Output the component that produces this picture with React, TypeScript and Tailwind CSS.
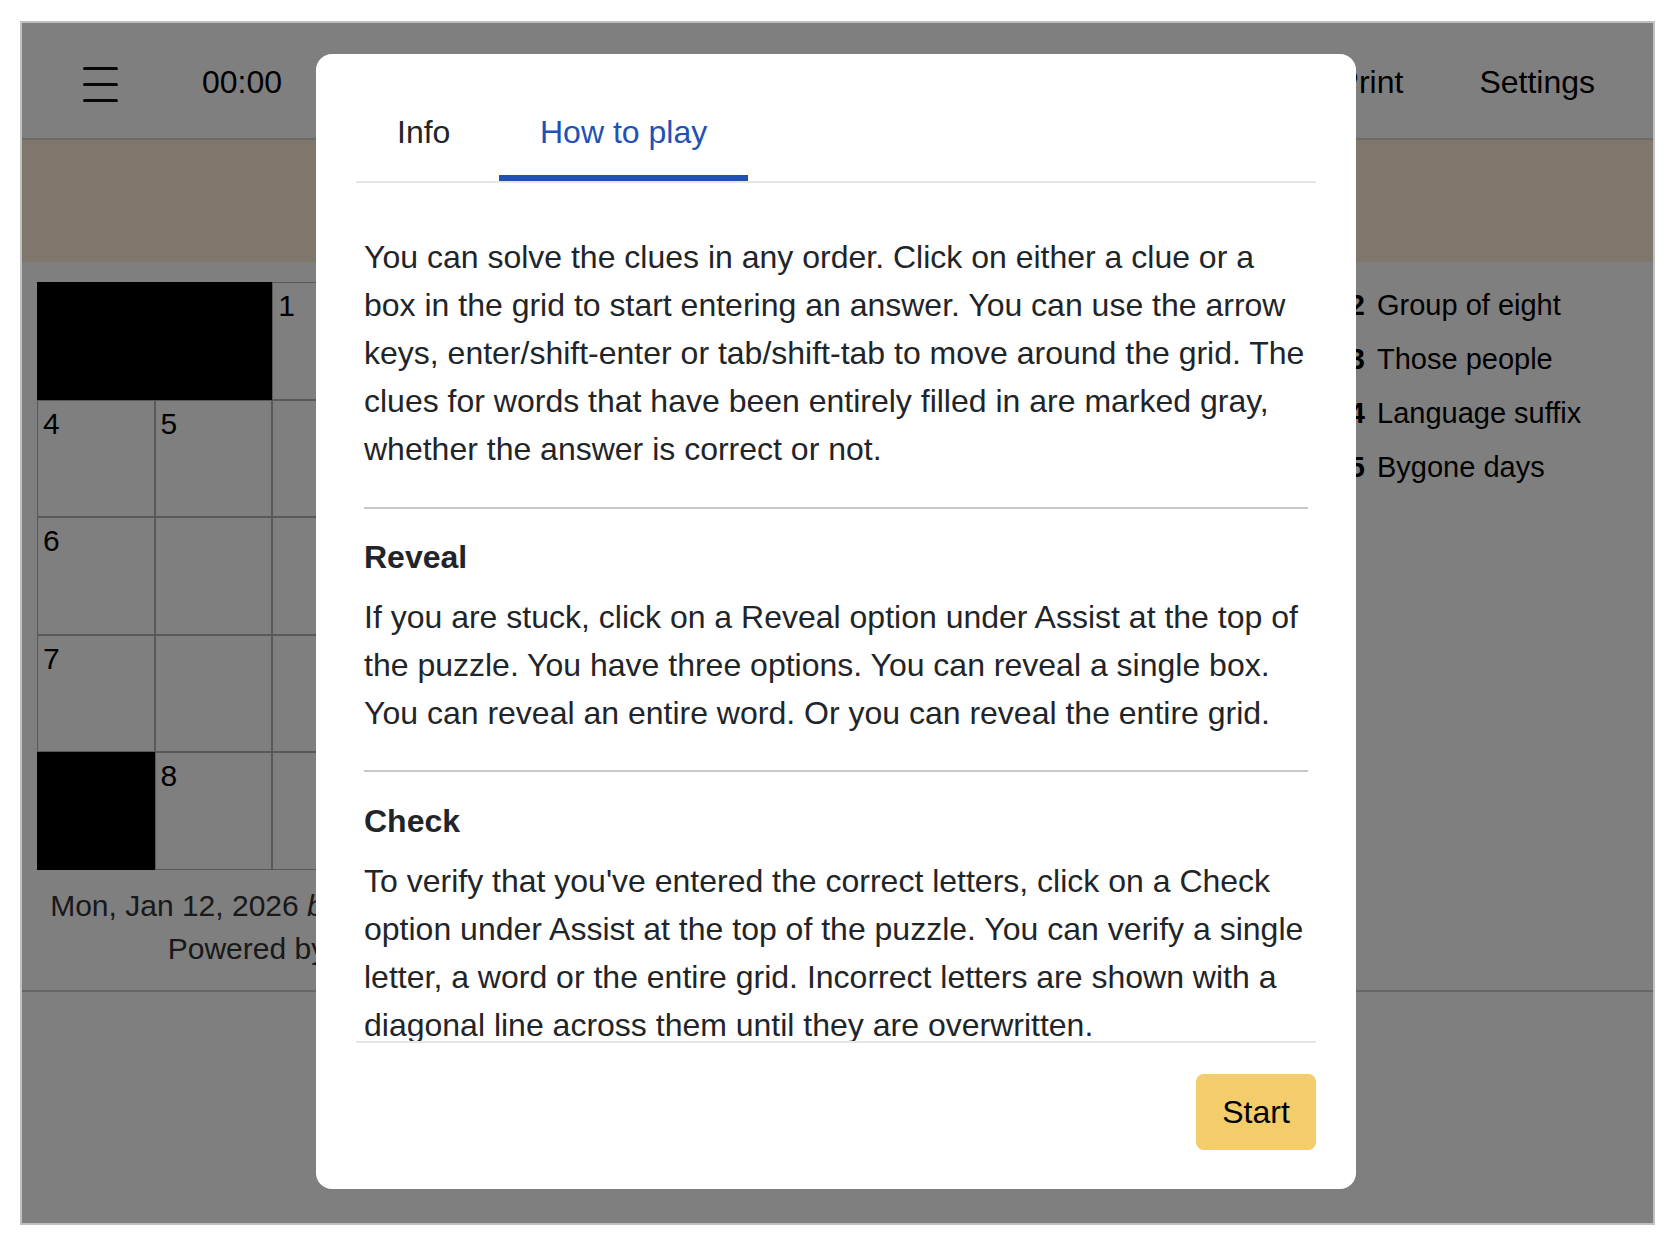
import React from 'react';

type Cell = { black?: boolean; num?: number };

const B: Cell = { black: true };
const E: Cell = {};

const GRID: Cell[][] = [
  [B, B, { num: 1 }, { num: 2 }, { num: 3 }],
  [{ num: 4 }, { num: 5 }, E, E, E],
  [{ num: 6 }, E, E, E, E],
  [{ num: 7 }, E, E, E, E],
  [B, { num: 8 }, E, E, E],
];

const ACROSS = [
  { n: 1, text: 'Sticky stuff' },
  { n: 4, text: 'Smartphone screen feature' },
  { n: 6, text: 'Opera solo' },
  { n: 7, text: 'Not home' },
  { n: 8, text: 'Paddles' },
];

const DOWN = [
  { n: 2, text: 'Group of eight' },
  { n: 3, text: 'Those people' },
  { n: 4, text: 'Language suffix' },
  { n: 5, text: 'Bygone days' },
];

function Clue({ n, text }: { n: number; text: string }) {
  return (
    <div className="flex leading-[54px]">
      <span className="w-[36px] shrink-0 text-right font-bold">{n}</span>
      <span className="ml-[12px]">{text}</span>
    </div>
  );
}

function Puzzle() {
  return (
    <div className="text-black">
      {/* toolbar */}
      <div className="flex h-[117px] items-center border-b-2 border-[#d6d6d6] pl-[61px] pr-[58px] pt-[3px] text-[32px]">
        <svg width="35" height="44" viewBox="0 0 35 44" className="-mt-[3px] shrink-0">
          <g stroke="#111" strokeWidth="3" strokeLinecap="round">
            <line x1="1.5" y1="9.5" x2="33.5" y2="9.5" />
            <line x1="1.5" y1="25.5" x2="33.5" y2="25.5" />
            <line x1="1.5" y1="41.5" x2="33.5" y2="41.5" />
          </g>
        </svg>
        <span className="ml-[84px]">00:00</span>
        <div className="ml-auto flex gap-[76px]">
          <span>Assist</span>
          <span>Print</span>
          <span>Settings</span>
        </div>
      </div>

      {/* clue bar */}
      <div className="flex h-[122px] items-center justify-center bg-[#feeed6] text-[29px]">
        <span className="font-bold">1A</span>
        <span className="ml-[16px]">Sticky stuff</span>
      </div>

      {/* board + clues */}
      <div className="flex border-b-2 border-[#cecece] pb-[20px]">
        <div className="w-[640px] shrink-0 pl-[15px] pt-[20px]">
          <div className="grid w-[588px] grid-cols-[repeat(5,117.6px)]">
            {GRID.flat().map((c, i) => (
              <div
                key={i}
                className={
                  c.black
                    ? 'h-[117.6px] border border-black bg-black'
                    : 'h-[117.6px] border border-[#b3b3b3] bg-white pl-[5px] pt-[8px] text-[30px] leading-[30px]'
                }
              >
                {c.num}
              </div>
            ))}
          </div>
          <div className="mt-[14px] w-[560px] text-center text-[30px] leading-[43px] text-[#333]">
            <div className="whitespace-nowrap">
              Mon, Jan 12, 2026 <i>by The Puzzle Editor</i>
            </div>
            <div className="whitespace-nowrap">Powered by PuzzleMe</div>
          </div>
        </div>

        <div className="flex flex-1 pt-[16px] text-[29px]">
          <div className="w-[667px] shrink-0">
            <div className="pl-[48px] font-bold leading-[54px]">ACROSS</div>
            {ACROSS.map((c) => (
              <Clue key={'a' + c.n} n={c.n} text={c.text} />
            ))}
            <div className="pl-[48px] font-bold leading-[54px]">DOWN</div>
            <Clue n={1} text="Hot drink" />
          </div>
          <div>
            {DOWN.map((c) => (
              <Clue key={'d' + c.n} n={c.n} text={c.text} />
            ))}
          </div>
        </div>
      </div>
    </div>
  );
}

function HowToPlay() {
  return (
    <div className="flex h-[1135px] w-[1040px] flex-col rounded-[16px] bg-white text-[#212529]">
      <div className="mx-[40px] mt-[35px] flex border-b-2 border-[#e6e6e6] text-[32px] leading-[48px]">
        <div className="w-[143px] border-b-[6px] border-transparent pb-[19px] pl-[41px] pt-[19px]">Info</div>
        <div className="border-b-[6px] border-[#2251b5] px-[41px] pb-[19px] pt-[19px] text-[#2251b5]">
          How to play
        </div>
      </div>

      <div className="mx-[40px] flex-1 overflow-hidden px-[8px] pt-[50px] text-[32px] leading-[48px]">
        <p className="whitespace-nowrap">
          You can solve the clues in any order. Click on either a clue or a
          <br />
          box in the grid to start entering an answer. You can use the arrow
          <br />
          keys, enter/shift-enter or tab/shift-tab to move around the grid. The
          <br />
          clues for words that have been entirely filled in are marked gray,
          <br />
          whether the answer is correct or not.
        </p>
        <div className="mt-[34px] h-[2px] bg-[#c8c8c8]" />
        <h3 className="mt-[30px] font-bold leading-[36px]">Reveal</h3>
        <p className="mt-[18px] whitespace-nowrap">
          If you are stuck, click on a Reveal option under Assist at the top of
          <br />
          the puzzle. You have three options. You can reveal a single box.
          <br />
          You can reveal an entire word. Or you can reveal the entire grid.
        </p>
        <div className="mt-[33px] h-[2px] bg-[#c8c8c8]" />
        <h3 className="mt-[31px] font-bold leading-[36px]">Check</h3>
        <p className="mt-[18px] whitespace-nowrap">
          To verify that you've entered the correct letters, click on a Check
          <br />
          option under Assist at the top of the puzzle. You can verify a single
          <br />
          letter, a word or the entire grid. Incorrect letters are shown with a
          <br />
          diagonal line across them until they are overwritten.
        </p>
      </div>

      <div className="mx-[40px] flex justify-end border-t-2 border-[#e6e6e6] pb-[39px] pt-[31px]">
        <button className="h-[76px] w-[120px] rounded-[8px] bg-[#f3cd6b] text-[32px] text-black">Start</button>
      </div>
    </div>
  );
}

export default function App() {
  return (
    <div className="min-h-screen bg-white pl-[20px] pt-[21px] font-['Liberation_Sans',Arial,sans-serif]">
      <div className="h-[1204px] w-[1635px] border-2 border-[#c0c0c0]">
        <div className="relative h-full w-full overflow-hidden bg-white">
          <Puzzle />
          <div className="absolute inset-0 bg-black/50 pl-[294px] pt-[31px]">
            <HowToPlay />
          </div>
        </div>
      </div>
    </div>
  );
}
